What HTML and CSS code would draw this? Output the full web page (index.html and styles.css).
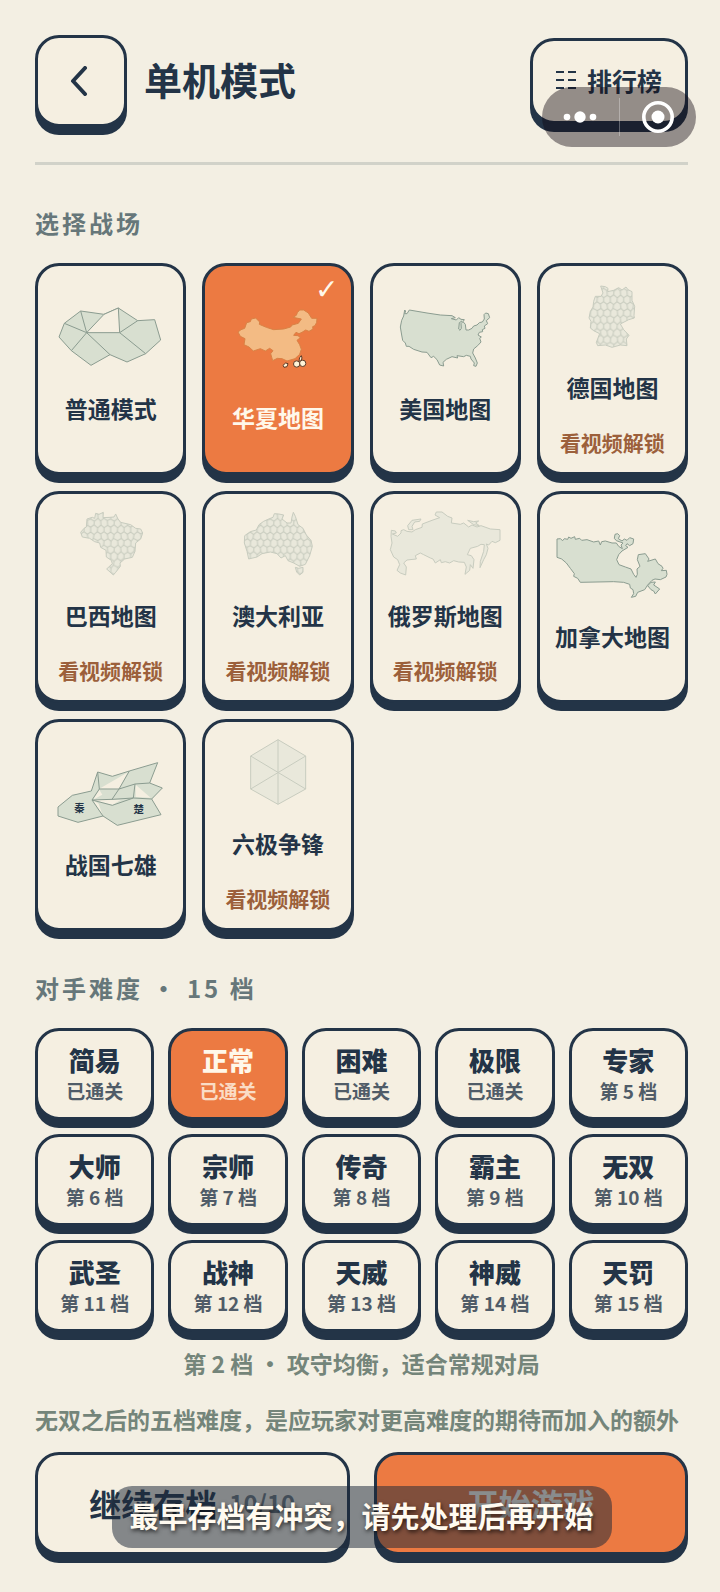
FILE: index.html
```html
<!DOCTYPE html>
<html lang="zh-CN">
<head>
<meta charset="utf-8">
<meta name="viewport" content="width=device-width, initial-scale=1">
<title>单机模式</title>
<link rel="stylesheet" href="styles.css">
</head>
<body>
<svg class="defs" width="0" height="0" aria-hidden="true">
  <defs>
    <pattern id="cells" width="60" height="80" patternUnits="userSpaceOnUse">
      <path class="cell-lines" d="M0 3L10-4L20 4L30-3L40 5L50-4L60 3M-9 23L2 16L10 24L22 17L31 25L38 16L51 23L62 16M-8 36L0 44L9 36L20 43L30 38L41 45L52 36L60 44M-9 65L1 56L10 64L21 57L30 63L40 55L51 65L61 56M0 83L10 76L20 84L30 77L40 85L50 76L60 83M0 3L2 16M20 4L22 17M40 5L38 16M60 3L62 16M10 24L9 36M31 25L30 38M51 23L52 36M0 44L1 56M20 43L21 57M41 45L40 55M60 44L61 56M10 64V76M30 63V77M51 65L50 76"/>
    </pattern>
    <path id="germany" d="M721 109L735 111L743 116L742 126L760 122L775 114L785 121L797 112L803 120L815 126L815 152L823 170L821 197L822 205L805 210L780 223L790 240L806 257L798 268L800 288L780 286L755 293L735 286L712 288L708 278L718 252L700 243L690 235L692 215L686 205L690 185L698 172L700 155L705 140L722 140L728 130Z"/>
    <path id="brazil" d="M180 158L190 146L197 142L199 118L215 113L222 116L225 101L235 104L248 98L247 114L268 113L280 112L285 103L292 118L300 128L330 135L345 146L360 148L366 160L360 178L345 190L343 215L335 233L312 238L298 250L299 260L285 278L278 286L258 268L275 252L272 242L257 232L256 212L240 203L237 190L222 186L207 176L185 172Z"/>
    <path id="australia" d="M673 168L690 156L708 151L716 135L730 125L745 118L758 113L762 102L775 103L790 106L785 118L800 130L812 130L815 112L819 98L825 110L833 135L848 146L858 166L872 182L876 200L868 228L855 254L838 260L820 250L803 243L795 228L782 235L770 222L750 217L725 222L710 232L685 238L680 215L672 190ZM825 263L835 266L848 263L848 278L838 286L829 277Z"/>
  </defs>
</svg>
<main class="page">
  <header class="header">
    <button class="tile back" type="button" aria-label="返回">
      <svg width="22" height="30" viewBox="0 0 22 30" aria-hidden="true"><path class="chevron" d="M15 2L3 15L15 28"/></svg>
    </button>
    <h1 class="title">单机模式</h1>
    <button class="tile rank" type="button">
      <svg width="20" height="20" viewBox="0 0 20 20" aria-hidden="true"><path class="dashes" d="M0 2H8M12 2H20M0 10H8M12 10H20M0 18H8M12 18H20"/></svg>
      排行榜
    </button>
    <div class="capsule">
      <button class="capsule-btn" type="button" aria-label="更多">
        <svg width="34" height="34" viewBox="0 0 34 34" aria-hidden="true"><circle cx="4" cy="17" r="3.3"/><circle cx="17" cy="17" r="5.7"/><circle cx="30" cy="17" r="3.3"/></svg>
      </button>
      <button class="capsule-btn" type="button" aria-label="关闭">
        <svg width="34" height="34" viewBox="0 0 34 34" aria-hidden="true"><circle class="ring" cx="17" cy="17" r="14.2"/><circle cx="17" cy="17" r="6.5"/></svg>
      </button>
    </div>
  </header>

  <section>
    <h2 class="section-title">选择战场</h2>
    <div class="maps">
      <button class="tile map" type="button">
        <svg class="art" viewBox="103 166 336 192" aria-hidden="true">
          <path class="land" d="M115 262L131 221L180 184L250 194L293 175L351 213L402 210L420 271L375 312L319 337L268 315L211 347L152 303Z"/>
          <path class="paper" d="M198 249L250 194L293 175L297 249Z"/>
          <path class="border" d="M131 221L198 249L180 184M152 303L198 249L268 315M297 249L351 213M297 249L375 312"/>
        </svg>
        <span class="map-name">普通模式</span>
      </button>
      <button class="tile map selected" type="button" aria-pressed="true">
        <span class="check" aria-hidden="true">✓</span>
        <svg class="art art-tall" viewBox="605 139 336 246" aria-hidden="true">
          <path class="china" d="M653 247L662 240L673 236L679 219L690 216L693 208L706 205L718 217L717 224L738 233L760 240L790 238L811 232L815 226L834 221L843 208L818 203L828 197L831 189L838 181L850 181L864 190L874 206L890 206L889 218L884 228L877 231L878 238L866 245L856 241L845 248L836 252L827 248L820 257L833 258L840 264L830 272L838 285L843 299L838 314L824 327L800 334L785 327L771 326L757 333L751 312L758 303L748 296L735 304L720 297L699 304L686 292L671 285L674 267L660 260Z"/>
          <path class="isle" d="M788 347L796 340L803 342L800 351L791 353ZM838 324L843 318L845 325L841 335L836 333Z"/>
          <circle class="isle" cx="847" cy="341" r="9.5"/><circle class="isle" cx="829" cy="343" r="9.5"/>
        </svg>
        <span class="map-name">华夏地图</span>
      </button>
      <button class="tile map" type="button">
        <svg class="art" viewBox="86 166 336 192" aria-hidden="true">
          <path class="land" d="M133 181L136 184L133 192L140 192L147 181L200 190L240 196L275 198L285 204L273 207L288 211L295 204L302 209L312 210L308 216L315 224L317 241L325 241L335 236L340 229L350 226L357 219L366 217L372 208L371 195L376 190L384 192L388 204L378 213L382 222L372 229L374 236L366 240L367 246L357 248L353 256L363 262L358 266L362 277L352 288L340 298L337 310L345 325L351 340L347 350L340 348L342 340L332 328L330 320L318 317L310 321L290 318L292 325L275 321L258 329L248 338L250 349L238 346L230 330L220 320L212 324L200 308L185 307L160 299L146 290L138 290L135 280L127 272L124 256L120 232L124 212L130 199Z"/>
          <path class="border" d="M305 214L297 219L295 238L299 242L303 236L302 222L308 216"/>
        </svg>
        <span class="map-name">美国地图</span>
      </button>
      <button class="tile map" type="button">
        <svg class="art" viewBox="587 103 336 192" aria-hidden="true">
          <use href="#germany" class="locked"/>
          <use href="#germany" class="cells"/>
        </svg>
        <span class="map-name">德国地图</span>
        <span class="unlock">看视频解锁</span>
      </button>
      <button class="tile map" type="button">
        <svg class="art" viewBox="103 97 336 192" aria-hidden="true">
          <use href="#brazil" class="locked"/>
          <use href="#brazil" class="cells"/>
        </svg>
        <span class="map-name">巴西地图</span>
        <span class="unlock">看视频解锁</span>
      </button>
      <button class="tile map" type="button">
        <svg class="art" viewBox="605 97 336 192" aria-hidden="true">
          <use href="#australia" class="locked"/>
          <use href="#australia" class="cells"/>
        </svg>
        <span class="map-name">澳大利亚</span>
        <span class="unlock">看视频解锁</span>
      </button>
      <button class="tile map" type="button">
        <svg class="art" viewBox="86 97 336 192" aria-hidden="true">
          <path class="locked" d="M93 152L105 154L108 160L96 163L112 170L122 160L122 153L130 150L140 155L155 157L165 150L185 143L186 133L215 122L238 114L224 106L228 97L245 97L262 110L275 115L273 130L300 134L310 130L325 142L335 136L350 142L362 138L390 148L419 150L419 182L405 189L395 185L385 196L378 193L383 206L378 225L370 240L359 264L360 245L370 215L372 195L362 194L352 200L330 206L321 225L333 228L341 240L338 266L330 255L328 272L314 284L318 262L312 248L295 247L280 243L268 250L255 246L243 249L240 240L225 250L218 238L210 235L190 225L180 220L165 228L168 238L140 241L130 250L138 262L136 286L120 280L110 272L118 255L112 240L100 232L90 210L95 190L92 170Z"/>
          <path class="locked" d="M145 150L142 138L155 122L182 118L178 125L163 127L155 140L158 150ZM322 122L340 126L355 124L346 130L357 138L340 135Z"/>
        </svg>
        <span class="map-name">俄罗斯地图</span>
        <span class="unlock">看视频解锁</span>
      </button>
      <button class="tile map" type="button">
        <svg class="art" viewBox="587 160 336 192" aria-hidden="true">
          <path class="land" d="M590 178L600 177L607 183L612 177L622 179L625 172L632 176L643 171L645 179L658 176L664 182L680 180L700 187L715 184L720 196L724 186L735 184L755 190L768 190L775 200L786 207L782 196L788 190L768 183L762 176L764 164L772 162L778 168L774 177L785 184L792 178L800 182L808 174L820 178L818 192L808 198L800 192L796 198L803 203L785 214L775 225L769 240L776 255L795 262L812 268L820 284L827 293L831 284L830 268L839 260L831 240L834 225L855 222L866 238L862 245L872 242L885 238L893 252L905 260L908 266L903 273L918 272L920 284L917 292L900 300L884 298L875 302L862 316L853 330L832 338L826 350L813 353L820 342L818 330L810 325L808 314L790 308L760 306L660 308L652 296L640 290L642 282L630 266L618 250L604 238L590 233Z"/>
          <path class="land" d="M862 318L872 308L885 307L880 316L898 328L885 343L880 334L872 330Z"/>
        </svg>
        <span class="map-name">加拿大地图</span>
      </button>
      <button class="tile map" type="button">
        <svg class="art" viewBox="103 154 336 192" role="img" aria-label="秦 楚">
          <path class="land" d="M112 292L155 257L212 244L231 187L275 200L326 184L411 159L387 220L425 235L393 268L421 315L290 347L247 319L172 338L112 319Z"/>
          <path class="paper-fill" d="M236 237L322 188L295 238ZM345 225L390 264L345 262ZM217 272L246 317L234 282ZM218 270L300 271L275 286ZM236 240L217 270L245 255Z"/>
          <path class="border" d="M231 187L236 238H295L326 184M236 238L214 271L274 269L295 238L343 223L387 220M343 223L338 265L274 269M338 265L393 268M214 271L247 319M214 271L275 287L338 265"/>
          <text class="state" x="176" y="306">秦</text>
          <text class="state" x="354" y="311">楚</text>
        </svg>
        <span class="map-name">战国七雄</span>
      </button>
      <button class="tile map" type="button">
        <svg class="art" viewBox="605 88 336 192" aria-hidden="true">
          <path class="locked" d="M773 87L856 136V235L773 281L691 235V136ZM773 87V281M691 136L856 235M856 136L691 235"/>
        </svg>
        <span class="map-name">六极争锋</span>
        <span class="unlock">看视频解锁</span>
      </button>
    </div>
  </section>

  <section>
    <h2 class="section-title second">对手难度 · 15 档</h2>
    <div class="levels">
      <button class="tile level" type="button"><b>简易</b><span>已通关</span></button>
      <button class="tile level selected" type="button" aria-pressed="true"><b>正常</b><span>已通关</span></button>
      <button class="tile level" type="button"><b>困难</b><span>已通关</span></button>
      <button class="tile level" type="button"><b>极限</b><span>已通关</span></button>
      <button class="tile level" type="button"><b>专家</b><span>第 5 档</span></button>
      <button class="tile level" type="button"><b>大师</b><span>第 6 档</span></button>
      <button class="tile level" type="button"><b>宗师</b><span>第 7 档</span></button>
      <button class="tile level" type="button"><b>传奇</b><span>第 8 档</span></button>
      <button class="tile level" type="button"><b>霸主</b><span>第 9 档</span></button>
      <button class="tile level" type="button"><b>无双</b><span>第 10 档</span></button>
      <button class="tile level" type="button"><b>武圣</b><span>第 11 档</span></button>
      <button class="tile level" type="button"><b>战神</b><span>第 12 档</span></button>
      <button class="tile level" type="button"><b>天威</b><span>第 13 档</span></button>
      <button class="tile level" type="button"><b>神威</b><span>第 14 档</span></button>
      <button class="tile level" type="button"><b>天罚</b><span>第 15 档</span></button>
    </div>
    <p class="hint center">第 2 档 · 攻守均衡，适合常规对局</p>
    <p class="hint note">无双之后的五档难度，是应玩家对更高难度的期待而加入的额外</p>
  </section>

  <footer class="actions">
    <button class="tile action" type="button">继续存档 <span class="count">10/10</span></button>
    <button class="tile action selected" type="button">开始游戏</button>
    <div class="toast" role="status">最早存档有冲突，请先处理后再开始</div>
  </footer>
</main>
</body>
</html>
```
FILE: styles.css
```css
:root {
  --ink: #233447;
  --paper: #f5efe1;
  --page: #f3efe3;
  --orange: #ec7a42;
}

* {
  box-sizing: border-box;
}

body {
  margin: 0;
  background: var(--page);
  color: var(--ink);
  font-family: "Noto Sans CJK SC", sans-serif;
  font-weight: 700;
}

button {
  font: inherit;
  color: inherit;
  padding: 0;
  cursor: pointer;
}

.defs {
  position: absolute;
}

.page {
  padding: 35px 32px 37px 35px;
}

.tile {
  display: flex;
  align-items: center;
  justify-content: center;
  background: var(--paper);
  border: 3px solid var(--ink);
  border-radius: 24px;
  box-shadow: 0 8px 0 var(--ink);
}

.tile.selected {
  background: var(--orange);
  color: #fff8ea;
}

.header {
  position: relative;
  display: flex;
  align-items: center;
  gap: 17px;
  padding-bottom: 35px;
  border-bottom: 3px solid #d1d2c9;
}

.back {
  width: 92px;
  height: 92px;
}

.chevron {
  fill: none;
  stroke: var(--ink);
  stroke-width: 4;
  stroke-linecap: round;
  stroke-linejoin: round;
}

.title {
  flex: 1;
  margin: 0;
  padding-bottom: 4px;
  font-size: 38px;
  line-height: 48px;
}

.rank {
  gap: 11px;
  width: 158px;
  height: 86px;
  padding-bottom: 2px;
  font-size: 25px;
  line-height: 32px;
}

.dashes {
  stroke: var(--ink);
  stroke-width: 2;
}

.capsule {
  position: absolute;
  top: 52px;
  right: -8px;
  display: flex;
  width: 154px;
  height: 60px;
  padding: 11px 0;
  border-radius: 30px;
  background: rgba(14, 5, 14, 0.42);
}

.capsule-btn {
  flex: 1;
  display: flex;
  align-items: center;
  justify-content: center;
  border: 0;
  background: none;
  fill: #fff;
}

.capsule-btn + .capsule-btn {
  border-left: 1px solid rgba(255, 255, 255, 0.3);
}

.ring {
  fill: none;
  stroke: #fff;
  stroke-width: 3.6;
}

.section-title {
  margin: 40px 0 22px;
  color: #66777a;
  font-size: 24px;
  line-height: 36px;
  letter-spacing: 3px;
}

.section-title.second {
  margin-top: 39px;
}

.maps {
  display: grid;
  grid-template-columns: repeat(4, 1fr);
  gap: 16px;
}

.map {
  position: relative;
  flex-direction: column;
  height: 212px;
}

.art {
  width: 112px;
  height: 64px;
  overflow: visible;
}

.art-tall {
  height: 82px;
}

.map-name {
  margin: 16px 0 2px;
  font-size: 23px;
  line-height: 46px;
}

.unlock {
  margin: 21px 0 4px;
  color: #9c603b;
  font-size: 21px;
  line-height: 18px;
}

.check {
  position: absolute;
  top: 8px;
  right: 12px;
  font-family: "DejaVu Sans", sans-serif;
  font-size: 28px;
  line-height: 32px;
}

.land {
  fill: #d8dfd0;
  stroke: #8b9c90;
  stroke-width: 3;
  stroke-linejoin: round;
}

.border {
  fill: none;
  stroke: #8b9c90;
  stroke-width: 3;
}

.paper {
  fill: var(--paper);
  stroke: #8b9c90;
  stroke-width: 3;
}

.paper-fill {
  fill: var(--paper);
}

.locked {
  fill: #e9e8db;
  stroke: #c8ccbf;
  stroke-width: 3;
}

.cells {
  fill: url(#cells);
}

.cell-lines {
  fill: none;
  stroke: #c6cabd;
  stroke-width: 3;
}

.china {
  fill: #f3bb84;
  stroke: #d98245;
  stroke-width: 3;
}

.isle {
  fill: #fff4d8;
  stroke: #5b3b28;
  stroke-width: 3;
}

.state {
  fill: var(--ink);
  font-size: 31px;
  text-anchor: middle;
}

.levels {
  display: grid;
  grid-template-columns: repeat(5, 1fr);
  gap: 14px;
}

.level {
  flex-direction: column;
  height: 92px;
  font-size: 26px;
  line-height: 34px;
}

.level span {
  font-size: 19px;
  line-height: 28px;
  opacity: 0.78;
}

.hint {
  margin: 0;
  color: #74857a;
  font-size: 23px;
  line-height: 30px;
}

.center {
  margin-top: 16px;
  text-align: center;
}

.note {
  margin-top: 26px;
  white-space: nowrap;
}

.actions {
  position: relative;
  display: grid;
  grid-template-columns: 1fr 1fr;
  gap: 24px;
  margin-top: 18px;
}

.action {
  gap: 12px;
  height: 103px;
  padding-bottom: 2px;
  font-size: 32px;
  line-height: 40px;
}

.count {
  font-size: 24px;
  opacity: 0.65;
}

.toast {
  position: absolute;
  top: 34px;
  left: 50%;
  transform: translateX(-50%);
  padding: 8px 18px 12px;
  border-radius: 20px;
  background: rgba(29, 40, 56, 0.52);
  color: #fffaf0;
  font-size: 29px;
  line-height: 42px;
  white-space: nowrap;
  text-shadow: 1px 2px 4px rgba(0, 0, 0, 0.7);
}
```
